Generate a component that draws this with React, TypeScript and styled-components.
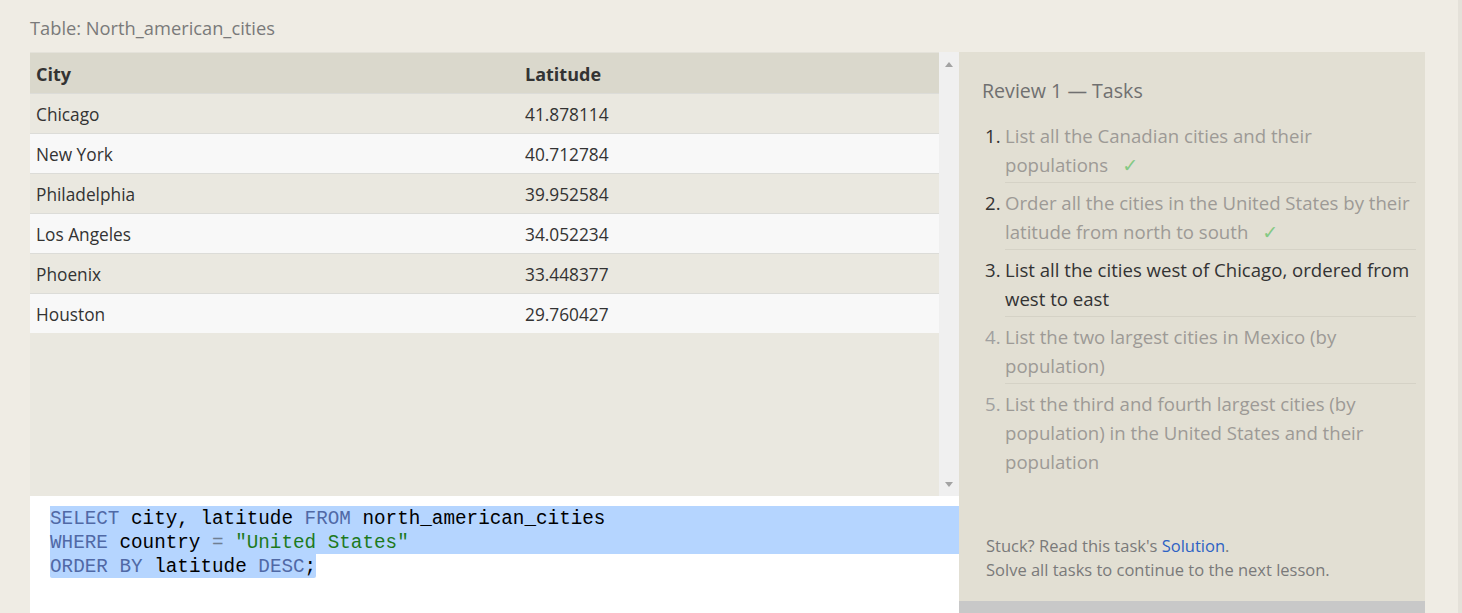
import React from "react";
import styled, { createGlobalStyle } from "styled-components";

const Global = createGlobalStyle`
  html, body { margin: 0; padding: 0; }
  body {
    background: #efece4;
    font-family: "Open Sans", "Noto Sans", sans-serif;
    overflow: hidden;
  }
`;

const Page = styled.div`
  display: flex;
  height: 613px;
  overflow: hidden;
`;

const Main = styled.div`
  flex: 1;
  padding-left: 30px;
  display: flex;
  flex-direction: column;
`;

const WindowEdge = styled.div`
  width: 4px;
  background: #e4e1d9;
`;

const TitleBar = styled.div`
  height: 52px;
  display: flex;
  align-items: center;
  padding-top: 2px;
  box-sizing: border-box;
  font-size: 18.3px;
  color: #7a7a7a;
`;

const Workspace = styled.div`
  display: flex;
  height: 561px;
`;

const LeftColumn = styled.div`
  width: 929px;
  display: flex;
  flex-direction: column;
`;

const TableArea = styled.div`
  height: 444px;
  display: flex;
`;

const TableScroller = styled.div`
  flex: 1;
  background: #eae8e0;
  border-top: 1px solid #e4e2da;
`;

const DataTable = styled.table`
  width: 100%;
  border-collapse: collapse;
  font-size: 17.3px;
  color: #333;
`;

const HeadCell = styled.th<{ $w?: number }>`
  text-align: left;
  font-weight: 700;
  font-size: 18px;
  height: 40px;
  padding: 2px 6px 0;
  background: #dad8cc;
  color: #333;
  width: ${(p) => (p.$w ? `${p.$w}px` : "auto")};
  box-sizing: border-box;
`;

const Row = styled.tr<{ $alt: boolean }>`
  background: ${(p) => (p.$alt ? "#f8f8f8" : "#eae8e0")};
  border-top: 1px solid #dcdcd8;
`;

const Cell = styled.td`
  height: 37px;
  padding: 2px 6px 0;
`;

const Scrollbar = styled.div`
  width: 20px;
  background: #f0f0f0;
  display: flex;
  flex-direction: column;
  justify-content: space-between;
  align-items: center;
  padding: 10px 0 9px;
  box-sizing: border-box;
`;

const Arrow = styled.div<{ $down?: boolean }>`
  width: 0;
  height: 0;
  border-left: 4px solid transparent;
  border-right: 4px solid transparent;
  ${(p) =>
    p.$down
      ? "border-top: 5px solid #a3a3a3;"
      : "border-bottom: 5px solid #a3a3a3;"}
`;

const Editor = styled.div`
  flex: 1;
  background: #ffffff;
  padding-top: 10px;
  font-family: "Liberation Mono", "DejaVu Sans Mono", monospace;
  font-size: 19.3px;
  line-height: 26px;
  color: #000;
`;

const CodeLine = styled.div<{ $selected?: boolean }>`
  margin-left: 20px;
  white-space: pre;
  height: 24px;
  overflow: visible;
  background: ${(p) => (p.$selected ? "#b5d5ff" : "transparent")};
`;

const Selected = styled.span`
  background: #b5d5ff;
  display: inline-block;
  height: 24px;
  border-radius: 0 0 2px 2px;
`;

const Kw = styled.span`
  color: #5069a6;
`;

const Str = styled.span`
  color: #1d7a1d;
`;

const Op = styled.span`
  color: #6f7f93;
`;

const TaskPanel = styled.div`
  width: 466px;
  background: #e2dfd3;
  display: flex;
  flex-direction: column;
`;

const PanelBody = styled.div`
  flex: 1;
  padding: 26px 9px 19px 23px;
  display: flex;
  flex-direction: column;
`;

const PanelTitle = styled.div`
  font-size: 19.6px;
  line-height: 26px;
  color: #707070;
  margin-bottom: 12px;
`;

const TaskList = styled.ol`
  list-style: none;
  margin: 0 0 0 3px;
  padding: 0;
`;

const TaskItem = styled.li`
  display: flex;
  font-size: 18.6px;
  line-height: 29px;
`;

const TaskNum = styled.span<{ $dim: boolean }>`
  width: 20px;
  flex: none;
  padding-top: 5px;
  color: ${(p) => (p.$dim ? "#a0a0a0" : "#333")};
`;

const TaskText = styled.span<{ $state: "done" | "current" | "todo"; $last: boolean }>`
  flex: 1;
  padding: 5px 0 3px;
  border-bottom: 1px solid ${(p) => (p.$last ? "transparent" : "#d5d2c6")};
  color: ${(p) => (p.$state === "current" ? "#333" : "#9d9a96")};
`;

const Check = styled.span`
  display: inline-block;
  color: #84c984;
  margin-left: 14px;
  font-family: "DejaVu Sans", sans-serif;
  font-size: 19px;
  line-height: 20px;
  vertical-align: baseline;
`;

const Footer = styled.div`
  margin-top: auto;
  padding-left: 4px;
  font-size: 16.5px;
  line-height: 24px;
  color: #7a7a7a;
`;

const Link = styled.a`
  color: #2d62c4;
  text-decoration: none;
`;

const BottomBar = styled.div`
  height: 12px;
  background: #c8c8c8;
`;

const rows = [
  ["Chicago", "41.878114"],
  ["New York", "40.712784"],
  ["Philadelphia", "39.952584"],
  ["Los Angeles", "34.052234"],
  ["Phoenix", "33.448377"],
  ["Houston", "29.760427"],
];

type TaskState = "done" | "current" | "todo";
const tasks: { text: string; state: TaskState }[] = [
  { text: "List all the Canadian cities and their populations", state: "done" },
  {
    text: "Order all the cities in the United States by their latitude from north to south",
    state: "done",
  },
  { text: "List all the cities west of Chicago, ordered from west to east", state: "current" },
  { text: "List the two largest cities in Mexico (by population)", state: "todo" },
  {
    text: "List the third and fourth largest cities (by population) in the United States and their population",
    state: "todo",
  },
];

export default function App() {
  return (
    <Page>
      <Global />
      <Main>
        <TitleBar>Table: North_american_cities</TitleBar>
        <Workspace>
          <LeftColumn>
            <TableArea>
              <TableScroller>
                <DataTable>
                  <thead>
                    <tr>
                      <HeadCell $w={489}>City</HeadCell>
                      <HeadCell>Latitude</HeadCell>
                    </tr>
                  </thead>
                  <tbody>
                    {rows.map((r, i) => (
                      <Row key={r[0]} $alt={i % 2 === 1}>
                        <Cell>{r[0]}</Cell>
                        <Cell>{r[1]}</Cell>
                      </Row>
                    ))}
                  </tbody>
                </DataTable>
              </TableScroller>
              <Scrollbar>
                <Arrow />
                <Arrow $down />
              </Scrollbar>
            </TableArea>
            <Editor>
              <CodeLine $selected>
                <Kw>SELECT</Kw> city, latitude <Kw>FROM</Kw> north_american_cities
              </CodeLine>
              <CodeLine $selected>
                <Kw>WHERE</Kw> country <Op>=</Op> <Str>"United States"</Str>
              </CodeLine>
              <CodeLine>
                <Selected>
                  <Kw>ORDER</Kw> <Kw>BY</Kw> latitude <Kw>DESC</Kw>;
                </Selected>
              </CodeLine>
            </Editor>
          </LeftColumn>
          <TaskPanel>
            <PanelBody>
              <PanelTitle>Review 1 — Tasks</PanelTitle>
              <TaskList>
                {tasks.map((t, i) => (
                  <TaskItem key={i}>
                    <TaskNum $dim={t.state === "todo"}>{i + 1}.</TaskNum>
                    <TaskText $state={t.state} $last={i === tasks.length - 1}>
                      {t.text}
                      {t.state === "done" && <Check>✓</Check>}
                    </TaskText>
                  </TaskItem>
                ))}
              </TaskList>
              <Footer>
                Stuck? Read this task's <Link href="#">Solution</Link>.
                <br />
                Solve all tasks to continue to the next lesson.
              </Footer>
            </PanelBody>
            <BottomBar />
          </TaskPanel>
        </Workspace>
      </Main>
      <WindowEdge />
    </Page>
  );
}
